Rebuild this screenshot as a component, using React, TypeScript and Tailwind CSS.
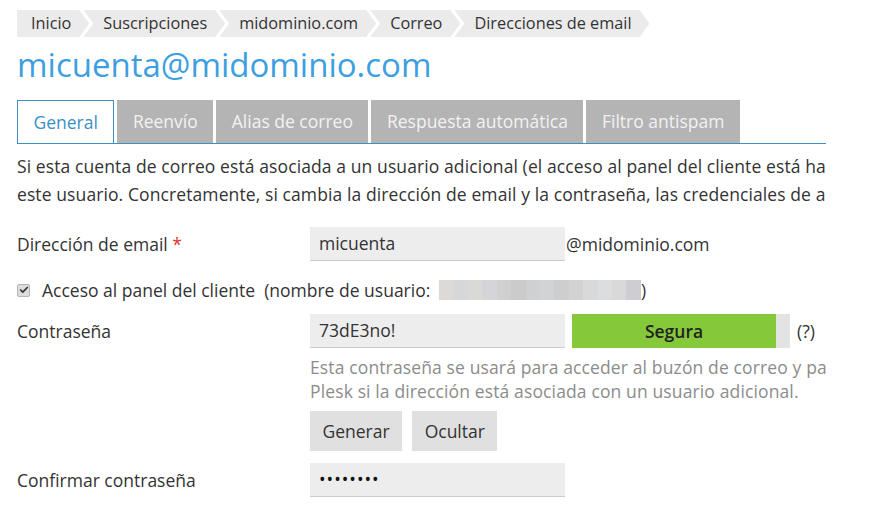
import { Check } from "lucide-react";

const crumbs = ["Inicio", "Suscripciones", "midominio.com", "Correo", "Direcciones de email"];
const tabs = ["General", "Reenvío", "Alias de correo", "Respuesta automática", "Filtro antispam"];
const blur = ["#dcd9d7", "#d6d7d9", "#dbd9d6", "#d3d5d8", "#cfd0cf", "#cbcbca", "#cfd0d1", "#d2d3d4", "#cdcecf", "#d4d2d0", "#d8d9da", "#dcdddf", "#dad9d8", "#ccced1"];

export default function App() {
    return (
        <div className="w-[889px] h-[506px] bg-white overflow-hidden px-[17px] pt-[10px] text-[#333] text-[17.5px]" style={{ fontFamily: "'Open Sans', sans-serif" }}>

            {/* Breadcrumb */}
            <div className="flex h-[27px] text-[16.3px]">
                {crumbs.map((c, i) => (
                    <div
                        key={c}
                        className={`flex items-center h-full bg-[#ebebeb] pr-[18px] leading-none ${i === 0 ? "pl-[14px] [clip-path:polygon(0_0,calc(100%-10px)_0,100%_50%,calc(100%-10px)_100%,0_100%)]" : "pl-[20px] -ml-[6px] [clip-path:polygon(0_0,calc(100%-10px)_0,100%_50%,calc(100%-10px)_100%,0_100%,10px_50%)]"}`}
                    >
                        {c}
                    </div>
                ))}
            </div>

            {/* Title */}
            <h1 className="mt-[8px] h-[40px] leading-[40px] text-[33px] text-[#3d9fe0]">micuenta@midominio.com</h1>

            {/* Tabs */}
            <div className="mt-[15px] w-[809px] flex gap-[3px] border-b border-[#3f8ec4] h-[44px]">
                {tabs.map((t, i) => (
                    <div
                        key={t}
                        className={`px-[15.5px] flex items-center h-full whitespace-nowrap ${i === 0 ? "bg-white text-[#3a8fc6] border border-b-0 border-[#3f8ec4] -mb-px h-[44px]" : "bg-[#b4b4b4] text-[#f2f2f2]"}`}
                    >
                        {t}
                    </div>
                ))}
            </div>

            {/* Intro */}
            <div className="mt-[8px] w-[809px] overflow-hidden whitespace-nowrap leading-[28px] tracking-[0.1px]">
                <div>Si esta cuenta de correo está asociada a un usuario adicional (el acceso al panel del cliente está ha</div>
                <div>este usuario. Concretamente, si cambia la dirección de email y la contraseña, las credenciales de a</div>
            </div>

            {/* Email */}
            <div className="mt-[19px] flex items-center">
                <div className="w-[293px]">
                    Dirección de email <span className="text-[#d33]">*</span>
                </div>
                <div className="w-[255px] h-[34px] bg-[#ededed] border-b border-[#c9ccd0] flex items-center px-[9px]">micuenta</div>
                <span className="ml-[1px]">@midominio.com</span>
            </div>

            {/* Checkbox */}
            <div className="mt-[17px] h-[24px] flex items-center whitespace-pre">
                <span className="w-[13px] h-[13px] rounded-[2px] bg-[#dcdcdc] border border-[#b5b5b5] flex items-center justify-center">
                    <Check className="w-[10px] h-[10px] text-[#333]" strokeWidth={4} />
                </span>
                <span className="ml-[12px] w-[397px]">Acceso al panel del cliente  (nombre de usuario: </span>
                <span className="flex h-[20px] w-[202px]">
                    {blur.map((b, i) => (
                        <span key={i} className="flex-1 h-full" style={{ backgroundColor: b }} />
                    ))}
                </span>
                <span>)</span>
            </div>

            {/* Password */}
            <div className="mt-[12px] flex items-center">
                <div className="w-[293px]">Contraseña</div>
                <div className="w-[255px] h-[34px] bg-[#ededed] border-b border-[#c9ccd0] flex items-center px-[9px]">73dE3no!</div>
                <div className="ml-[7px] w-[218px] h-[34px] bg-[#e3e3e3] flex">
                    <div className="w-[204px] h-full bg-[#85c83a] flex items-center justify-center font-semibold text-[#222]">Segura</div>
                </div>
                <span className="ml-[7px]">(?)</span>
            </div>

            <div className="ml-[293px] mt-[7px] w-[516px] overflow-hidden whitespace-nowrap leading-[24px] text-[#8c8c8c] tracking-[0.13px]">
                <div>Esta contraseña se usará para acceder al buzón de correo y pa</div>
                <div>Plesk si la dirección está asociada con un usuario adicional.</div>
            </div>

            <div className="ml-[293px] mt-[8px] flex gap-[10px]">
                <button className="h-[40px] px-[12.5px] bg-[#e0e0e0] text-[#333]">Generar</button>
                <button className="h-[40px] px-[12.5px] bg-[#e0e0e0] text-[#333]">Ocultar</button>
            </div>

            {/* Confirm */}
            <div className="mt-[12px] flex items-center">
                <div className="w-[293px]">Confirmar contraseña</div>
                <div className="w-[255px] h-[34px] bg-[#ededed] border-b border-[#c9ccd0] flex items-center px-[9px] tracking-[1px] text-[#111]">••••••••</div>
            </div>
        </div>
    );
}
